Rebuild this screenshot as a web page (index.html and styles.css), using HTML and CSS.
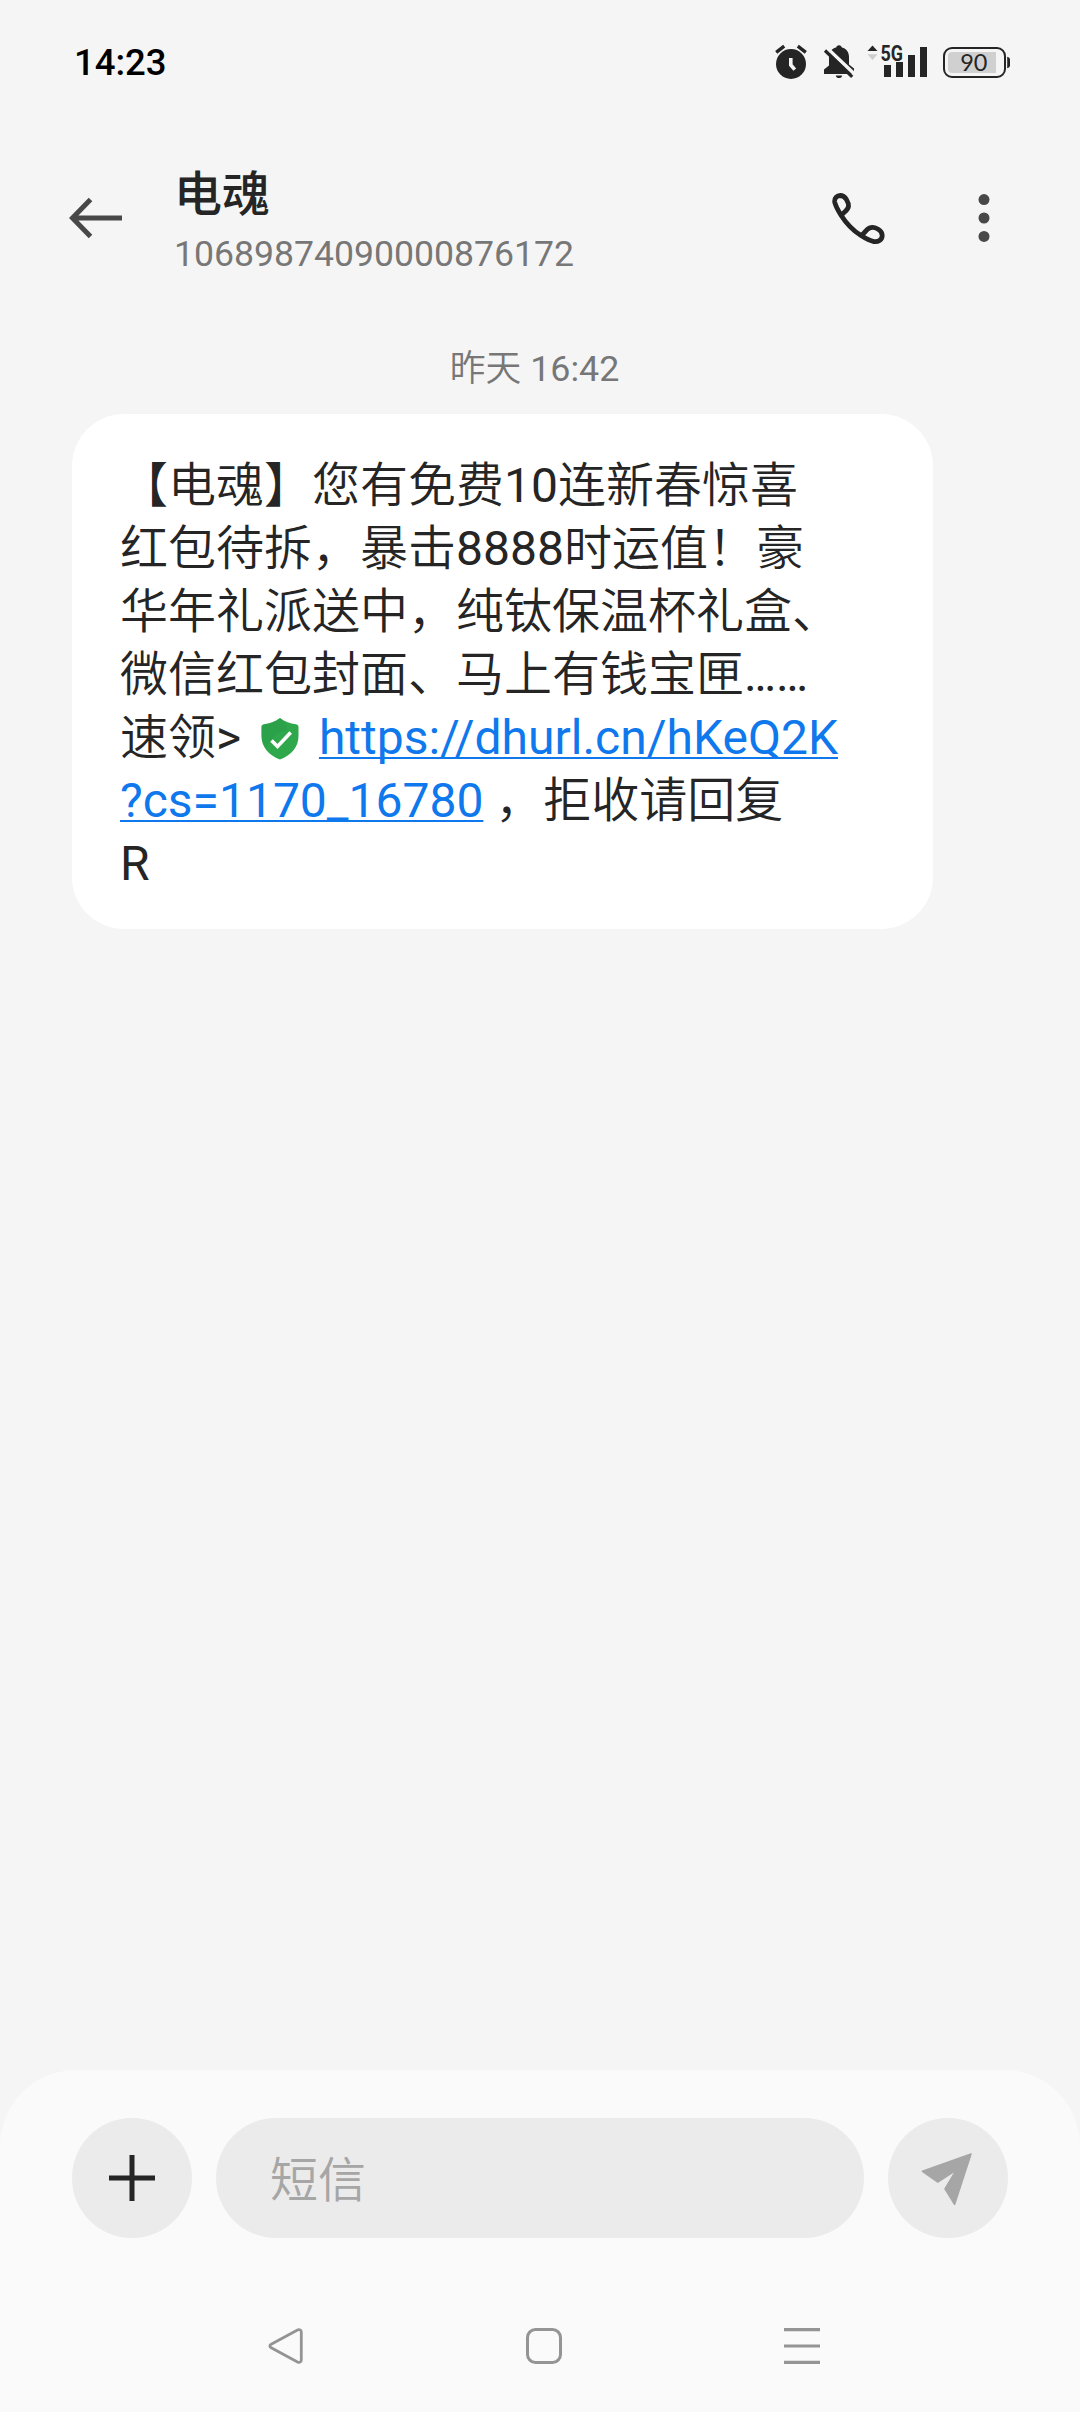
FILE: index.html
```html
<!DOCTYPE html>
<html lang="zh-CN">
<head>
<meta charset="utf-8">
<title>电魂</title>
<link rel="stylesheet" href="styles.css">
</head>
<body>
<div class="screen">
  <div class="status">
    <span class="clock">14:23</span>
    <div class="status-icons">
      <svg class="alarm" width="32" height="36" viewBox="0 0 32 36">
        <circle cx="16" cy="20" r="15" fill="#252525"/>
        <path d="M1.2 8.4 9.2 2.2M30.8 8.4 22.8 2.2" stroke="#252525" stroke-width="3.4" fill="none"/>
        <path d="M15.8 14v7l4 4.6" stroke="#f5f5f5" stroke-width="3.6" fill="none"/>
      </svg>
      <svg class="bell" width="32" height="36" viewBox="0 0 32 36">
        <path d="M16 1.2c1.600 0 2.600 1 2.900 2.300C23.600 4.800 26 8.300 26 13v7.500l5 4V30H1v-4.500l5-4V13c0-4.700 2.400-8.200 7.100-9.500.3-1.300 1.300-2.300 2.900-2.300zM12.800 31.500h6.400c-.4 1.800-1.600 2.600-3.200 2.600s-2.800-.8-3.200-2.600z" fill="#252525"/>
        <path d="M4.200 4.300 32.500 31" stroke="#f5f5f5" stroke-width="3.600"/>
        <path d="M2 6.500 29.200 32.800" stroke="#252525" stroke-width="3.200"/>
      </svg>
      <svg class="signal" width="61" height="36" viewBox="0 0 61 36">
        <path d="M.5 7 5.500 1.500 10.500 7z" fill="#252525"/>
        <path d="M.5 10.200h10l-5 5.800z" fill="#cdcdcd"/>
        <text x="13.600" y="16.500" textLength="22.500" lengthAdjust="spacingAndGlyphs" class="network">5G</text>
        <path d="M17 21h7v12h-7zM29 18h7v15h-7zM41 11h7v22h-7zM53 3h7v30h-7z" fill="#252525"/>
      </svg>
      <svg class="battery" width="68" height="32" viewBox="0 0 68 32">
        <rect x="1" y="1" width="61" height="29" rx="8" fill="none" stroke="#252525" stroke-width="2"/>
        <path d="M9 5h44v21H9a4 4 0 0 1-4-4V9a4 4 0 0 1 4-4z" fill="#d0d0d0"/>
        <path d="M64.200 9.700c1.800.6 2.800 1.400 2.800 3v5.600c0 1.600-1 2.400-2.800 3z" fill="#252525"/>
        <text x="17.200" y="23.800" class="level">90</text>
      </svg>
    </div>
  </div>

  <header class="header">
    <svg class="back" width="54" height="44" viewBox="0 0 54 44">
      <path d="M53 22H4M21.500 3.500 3.500 22l18 18.500" fill="none" stroke="#484848" stroke-width="5"/>
    </svg>
    <div class="contact">
      <h1 class="name">电魂</h1>
      <div class="number">10689874090000876172</div>
    </div>
    <svg class="call" width="54" height="54" viewBox="0 0 54 54">
      <path d="M10.200 22.500C6.500 16.500 4 12 3.600 8.500 3.300 5 6 2.600 9.300 2.500c2.700 0 4.500 1.300 6 3.700 1.500 2.500 2.400 4.600 2.200 7-.3 4-4.500 5.500-7.300 9.300C15 30 22 37.500 30 42.600c5 3.200 9 5.200 13 6 4 .6 8-1.500 8.200-6 .1-3.400-1.600-5-4.400-6.600-2.700-1.500-5.500-2.200-8.300-1-3.500 1.500-4.500 5-8.500 7.600" fill="none" stroke="#252525" stroke-width="4.800" stroke-linejoin="round"/>
    </svg>
    <svg class="more" width="12" height="50" viewBox="0 0 12 50">
      <g fill="#484848"><circle cx="6" cy="6.600" r="5.500"/><circle cx="6" cy="25" r="5.500"/><circle cx="6" cy="43.400" r="5.500"/></g>
    </svg>
  </header>

  <main class="thread">
    <time class="date">昨天 16:42</time>
    <p class="bubble">【电魂】您有免费10连新春惊喜<br>红包待拆，暴击8888时运值！豪<br>华年礼派送中，纯钛保温杯礼盒、<br>微信红包封面、马上有钱宝匣……<br>速领&gt; <svg class="shield" width="38" height="42" viewBox="0 0 38 42"><path d="M19 0c5 4 10 5.500 16 6.300 1.800.4 2.500 1.200 2.500 3V18c0 11-7 19-18.500 23.500C7.500 37 .5 29 .5 18V9.300c0-1.800.7-2.600 2.500-3C9 5.500 14 4 19 0z" fill="#2fa84c"/><path d="M19 0c5 4 8 8 7 12C16 14 9 20 6 31 2.500 27 .5 23 .5 18V9.300c0-1.800.7-2.600 2.500-3C9 5.500 14 4 19 0z" fill="#299a47" opacity=".45"/><path d="m10.500 22.500 6 6 13.200-14" fill="none" stroke="#fff" stroke-width="3.600"/></svg> <a class="link">https://dhurl.cn/hKeQ2K<br>?cs=1170_16780</a> ，拒收请回复<br>R</p>
  </main>

  <footer class="sheet">
    <div class="composer">
      <div class="round">
        <svg width="46" height="46" viewBox="0 0 46 46"><path d="M0 23h46M23 0v46" stroke="#252525" stroke-width="5"/></svg>
      </div>
      <div class="field">短信</div>
      <div class="round">
        <svg class="send" width="52" height="52" viewBox="0 0 52 52"><path d="M1.500 18.300 50 1 33.600 51.300 24 35.800 35.200 17.200 16.800 29z" fill="#a6a6a6" stroke="#a6a6a6" stroke-width="1.600" stroke-linejoin="round"/></svg>
      </div>
    </div>
    <nav class="nav">
      <svg width="36" height="38" viewBox="0 0 36 38"><path d="M3.200 17.200 29.500 3c2-1 3.800 0 3.800 2v28c0 2-1.800 3-3.800 2L3.200 20.800c-1.800-1-1.800-2.600 0-3.600z" fill="none" stroke="#949494" stroke-width="2.800"/></svg>
      <svg width="36" height="38" viewBox="0 0 36 38"><rect x="1.500" y="2.500" width="33" height="33" rx="8" fill="none" stroke="#949494" stroke-width="3"/></svg>
      <svg width="36" height="38" viewBox="0 0 36 38"><path d="M0 2.700h36M0 19h36M0 35.300h36" stroke="#949494" stroke-width="3.200"/></svg>
    </nav>
  </footer>
</div>
</body>
</html>
```
FILE: styles.css
```css
* { box-sizing: border-box; }

body {
  margin: 0;
  background: #f5f5f5;
  color: #252525;
  font-family: Roboto, "Noto Sans CJK SC DemiLight", "Noto Sans CJK SC", sans-serif;
  text-spacing-trim: space-all;
}

svg { display: block; overflow: visible; flex: none; }

.screen {
  width: 1080px;
  height: 2412px;
  display: flex;
  flex-direction: column;
}

.status {
  height: 126px;
  padding: 0 69px 0 74px;
  display: flex;
  justify-content: space-between;
}

.clock {
  padding-top: 42px;
  font-size: 36.500px;
  line-height: 42px;
  font-weight: 500;
  color: #000;
}

.status-icons {
  display: flex;
  align-items: flex-start;
  padding-top: 44px;
}

.bell { margin-left: 16px; }
.signal { margin-left: 12px; }
.battery { margin: 3px 0 0 15px; }

.network {
  font: 700 21.500px Roboto, sans-serif;
  fill: #252525;
}

.level {
  font: 400 23.500px Lato, sans-serif;
  fill: #252525;
}

.header {
  height: 184px;
  padding: 0 90px 0 69px;
  display: flex;
  align-items: center;
}

.contact {
  flex: 1;
  margin-left: 51px;
  padding-top: 8px;
}

.name {
  margin: 0;
  font-family: Roboto, "Noto Sans CJK SC", sans-serif;
  font-size: 48px;
  line-height: 64px;
  font-weight: 500;
}

.number {
  font-size: 35.600px;
  line-height: 54px;
  color: #777;
}

.call { margin: 3px 93px 0 0; }

.thread {
  flex: 1;
  padding: 33px 147px 0 72px;
}

.date {
  display: block;
  padding-left: 64px;
  text-align: center;
  font-size: 35.800px;
  line-height: 52px;
  color: #777;
}

.bubble {
  margin: 19px 0 0;
  height: 515px;
  padding: 40px 48px 0;
  border-radius: 52px;
  background: #fff;
  font-size: 48px;
  line-height: 63px;
  white-space: nowrap;
}

.shield {
  display: inline-block;
  margin: 0 8px;
  vertical-align: -6px;
}

.link {
  color: #0f78ec;
  text-decoration: underline 2px;
  text-decoration-skip-ink: none;
  text-underline-offset: 3px;
}

.sheet {
  height: 342px;
  padding: 48px 72px 0;
  border-radius: 76px 76px 0 0;
  background: #fafafa;
}

.composer { display: flex; gap: 24px; }

.round {
  width: 120px;
  height: 120px;
  border-radius: 50%;
  background: #ebebeb;
  display: flex;
  align-items: center;
  justify-content: center;
}

.send { margin: 2px 3px 0 0; }

.field {
  flex: 1;
  padding-left: 54px;
  border-radius: 60px;
  background: #ebebeb;
  color: #a6a6a6;
  font-size: 48px;
  line-height: 126px;
  height: 120px;
}

.nav {
  display: flex;
  justify-content: space-between;
  padding: 89px 188px 0 196px;
}
```
